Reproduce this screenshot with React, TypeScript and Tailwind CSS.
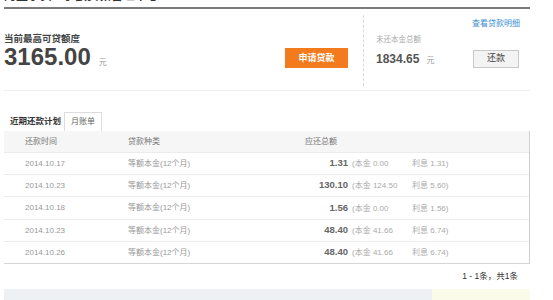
const rows = [
  { date: '2014.10.17', type: '等额本金(12个月)', total: '1.31', principal: '0.00', interest: '1.31', h: 'h-[22px]' },
  { date: '2014.10.23', type: '等额本金(12个月)', total: '130.10', principal: '124.50', interest: '5.60', h: 'h-[22px]' },
  { date: '2014.10.18', type: '等额本金(12个月)', total: '1.56', principal: '0.00', interest: '1.56', h: 'h-[23px]' },
  { date: '2014.10.23', type: '等额本金(12个月)', total: '48.40', principal: '41.66', interest: '6.74', h: 'h-[22px]' },
  { date: '2014.10.26', type: '等额本金(12个月)', total: '48.40', principal: '41.66', interest: '6.74', h: 'h-[22px]' },
]

export default function App() {
  return (
    <div className="w-[553px] h-[300px] overflow-hidden bg-white font-['Liberation_Sans','Noto_Sans_CJK_SC',sans-serif]">
      <div className="w-[526px] ml-[4px]">
        {/* page title, mostly scrolled off */}
        <div className="h-[3px] overflow-hidden">
          <p className="-mt-[10px] text-[12px] leading-[13px] font-bold text-[#333]">阿里小贷 - 小额贷款管理中心</p>
        </div>
        <div className="mt-[4px] h-[2px] bg-[#7a7a7a]" />

        {/* summary */}
        <div className="flex h-[82px] border-b border-[#eee]">
          <div className="w-[359px] pt-[24px] pr-[15px]">
            <p className="text-[9.5px] leading-[12px] font-bold text-[#444]">当前最高可贷额度</p>
            <div className="flex items-center justify-between h-[24px]">
              <div className="flex items-baseline">
                <span className="text-[24px] leading-[24px] font-bold text-[#444]">3165.00</span>
                <span className="ml-[8px] text-[8px] text-[#999]">元</span>
              </div>
              <button className="w-[63px] h-[20px] mt-[2px] bg-[#f37b1d] text-white text-[9px] font-bold leading-[20px]">申请贷款</button>
            </div>
          </div>
          <div className="flex-1 flex flex-col mt-[6px] mb-[4px] border-l border-dashed border-[#d8d8d8] pl-[12px] pr-[10px]">
            <p className="mt-[4px] text-right text-[8px] leading-[10px] text-[#3a8ed2]">查看贷款明细</p>
            <p className="mt-[6px] text-[7.5px] leading-[10px] text-[#aaa]">未还本金总额</p>
            <div className="mt-[5px] flex items-center justify-between">
              <div className="flex items-baseline">
                <span className="text-[12px] font-bold text-[#555]">1834.65</span>
                <span className="ml-[7px] text-[8px] text-[#999]">元</span>
              </div>
              <button className="w-[46px] h-[18px] mr-[1px] bg-[#f3f3f3] border border-[#c9c9c9] text-[9px] text-[#444]">还款</button>
            </div>
          </div>
        </div>

        {/* tabs */}
        <div className="mt-[21px] flex items-end h-[19px]">
          <div className="h-[19px] pl-[6px] pr-[3px] flex items-center text-[8.5px] font-bold text-[#333]">近期还款计划</div>
          <div className="h-[19px] px-[6px] flex items-center border border-b-0 border-[#ddd] text-[8px] text-[#666]">月账单</div>
        </div>

        {/* schedule table */}
        <div className="border-r border-[#cfcfcf]">
          <div className="grid grid-cols-[124px_177px_1fr] h-[22px] items-center bg-[#f6f6f6] border-b border-[#ececec] text-[8px] text-[#777]">
            <span className="pl-[21px]">还款时间</span>
            <span>贷款种类</span>
            <span>应还总额</span>
          </div>
          {rows.map((r, i) => (
            <div
              key={i}
              className={`grid grid-cols-[124px_177px_1fr] ${r.h} items-center border-b text-[8px] text-[#999] ${i === rows.length - 1 ? 'border-[#d6d6d6]' : 'border-[#ececec]'}`}
            >
              <span className="pl-[21px]">{r.date}</span>
              <span>{r.type}</span>
              <div className="flex items-baseline">
                <span className="w-[43px] text-right text-[9.5px] font-bold text-[#666]">{r.total}</span>
                <span className="ml-[4px] w-[60px] text-[#aaa]">(本金 {r.principal}</span>
                <span className="text-[#aaa]">利息 {r.interest})</span>
              </div>
            </div>
          ))}
        </div>

        <p className="mt-[7px] pr-[12px] text-right text-[8.5px] leading-[10px] text-[#333]">1 - 1条，共1条</p>

        <div className="mt-[8px] flex h-[12px]">
          <div className="w-[428px] bg-[#eef1f3]" />
          <div className="flex-1 bg-[#fbfbe9]" />
        </div>
      </div>
    </div>
  )
}
